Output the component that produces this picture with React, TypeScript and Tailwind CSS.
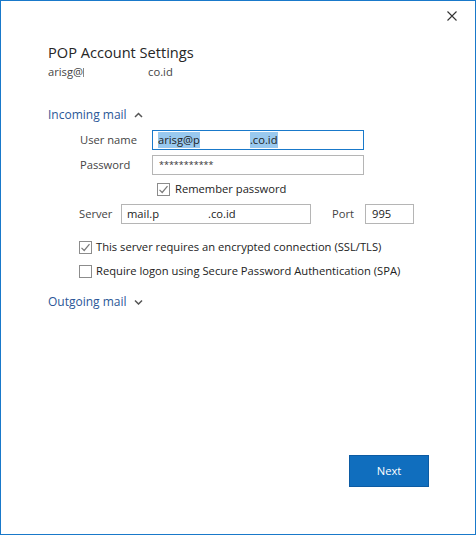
import React from "react";

const font = { fontFamily: '"Open Sans", "Noto Sans", sans-serif' };

function Check({ checked }: { checked?: boolean }) {
  return (
    <span className="flex h-[13px] w-[13px] shrink-0 items-center justify-center border border-[#8c8c8c] bg-white">
      {checked && (
        <svg width="11" height="11" viewBox="0 0 11 11" fill="none">
          <path d="M1.5 5.8 L4.2 8.5 L9.5 2.2" stroke="#7a7a7a" strokeWidth="1.2" />
        </svg>
      )}
    </span>
  );
}

function Chevron({ up }: { up?: boolean }) {
  return (
    <svg width="9" height="6" viewBox="0 0 9 6" fill="none" className="ml-[7px]">
      <path d={up ? "M1 5 L4.5 1.5 L8 5" : "M1 1.5 L4.5 5 L8 1.5"} stroke="#555" strokeWidth="1.5" />
    </svg>
  );
}

export default function App() {
  return (
    <div
      className="flex h-[535px] w-[476px] flex-col border border-[#1979ca] bg-white text-[11.2px] text-[#3b3b3b]"
      style={font}
    >
      {/* close */}
      <div className="flex h-[30px] items-center justify-end pr-[18px]">
        <svg width="10" height="10" viewBox="0 0 10 10">
          <path d="M0.5 0.5 L9.5 9.5 M9.5 0.5 L0.5 9.5" stroke="#333" strokeWidth="1.1" />
        </svg>
      </div>

      <div className="pl-[47px]">
        <div className="mt-[11px] h-[20px] text-[14.6px] leading-[20px] text-[#262626]">POP Account Settings</div>
        <div className="mt-[2px] flex h-[16px] items-center leading-[16px] text-[#444]">
          <span>arisg@</span>
          <span className="h-[9px] w-[1px] bg-[#888]" />
          <span className="ml-[64px]">co.id</span>
        </div>

        <div className="mt-[26px] flex h-[18px] items-center text-[12px] text-[#2b5797]">
          Incoming mail
          <Chevron up />
        </div>

        <div className="pl-[32px]">
          <div className="mt-[6px] flex h-[20px] items-center">
            <span className="w-[72px] text-[#444]">User name</span>
            <div className="flex h-[20px] w-[212px] items-center border border-[#1979ca] pl-[5px] text-[#222]">
              <span className="bg-[#99c9ef]">arisg@p</span>
              <span className="w-[50px]" />
              <span className="bg-[#99c9ef]">.co.id</span>
            </div>
          </div>
          <div className="mt-[5px] flex h-[20px] items-center">
            <span className="w-[72px] text-[#444]">Password</span>
            <div className="flex h-[20px] w-[212px] items-center border border-[#b5b5b5] pl-[6px] text-[9px] text-[#333]">
              ***********
            </div>
          </div>
          <div className="mt-[4px] flex h-[20px] items-center pl-[77px]">
            <Check checked />
            <span className="ml-[5px] text-[#222]">Remember password</span>
          </div>
          <div className="mt-[5px] flex h-[20px] items-center -ml-[1px]">
            <span className="w-[42px] text-[#444]">Server</span>
            <div className="flex h-[20px] w-[190px] items-center border border-[#b5b5b5] pl-[5px] text-[#222]">
              <span>mail.p</span>
              <span className="w-[49px]" />
              <span>.co.id</span>
            </div>
            <span className="ml-[21px] w-[33px] text-[#444]">Port</span>
            <div className="flex h-[20px] w-[49px] items-center border border-[#b5b5b5] pl-[6px] text-[#222]">995</div>
          </div>
          <div className="mt-[13px] flex h-[20px] items-center -ml-[1px]">
            <Check checked />
            <span className="ml-[4px] text-[#222]">This server requires an encrypted connection (SSL/TLS)</span>
          </div>
          <div className="mt-[4px] flex h-[20px] items-center -ml-[1px]">
            <Check />
            <span className="ml-[4px] text-[#222]">Require logon using Secure Password Authentication (SPA)</span>
          </div>
        </div>

        <div className="mt-[12px] flex h-[18px] items-center text-[12px] text-[#2b5797]">
          Outgoing mail
          <Chevron />
        </div>
      </div>

      <div className="mt-auto flex justify-end pb-[47px] pr-[46px]">
        <button className="h-[32px] w-[80px] border border-[#0c5ba3] bg-[#106ebe] text-[11.2px] text-white">Next</button>
      </div>
    </div>
  );
}
